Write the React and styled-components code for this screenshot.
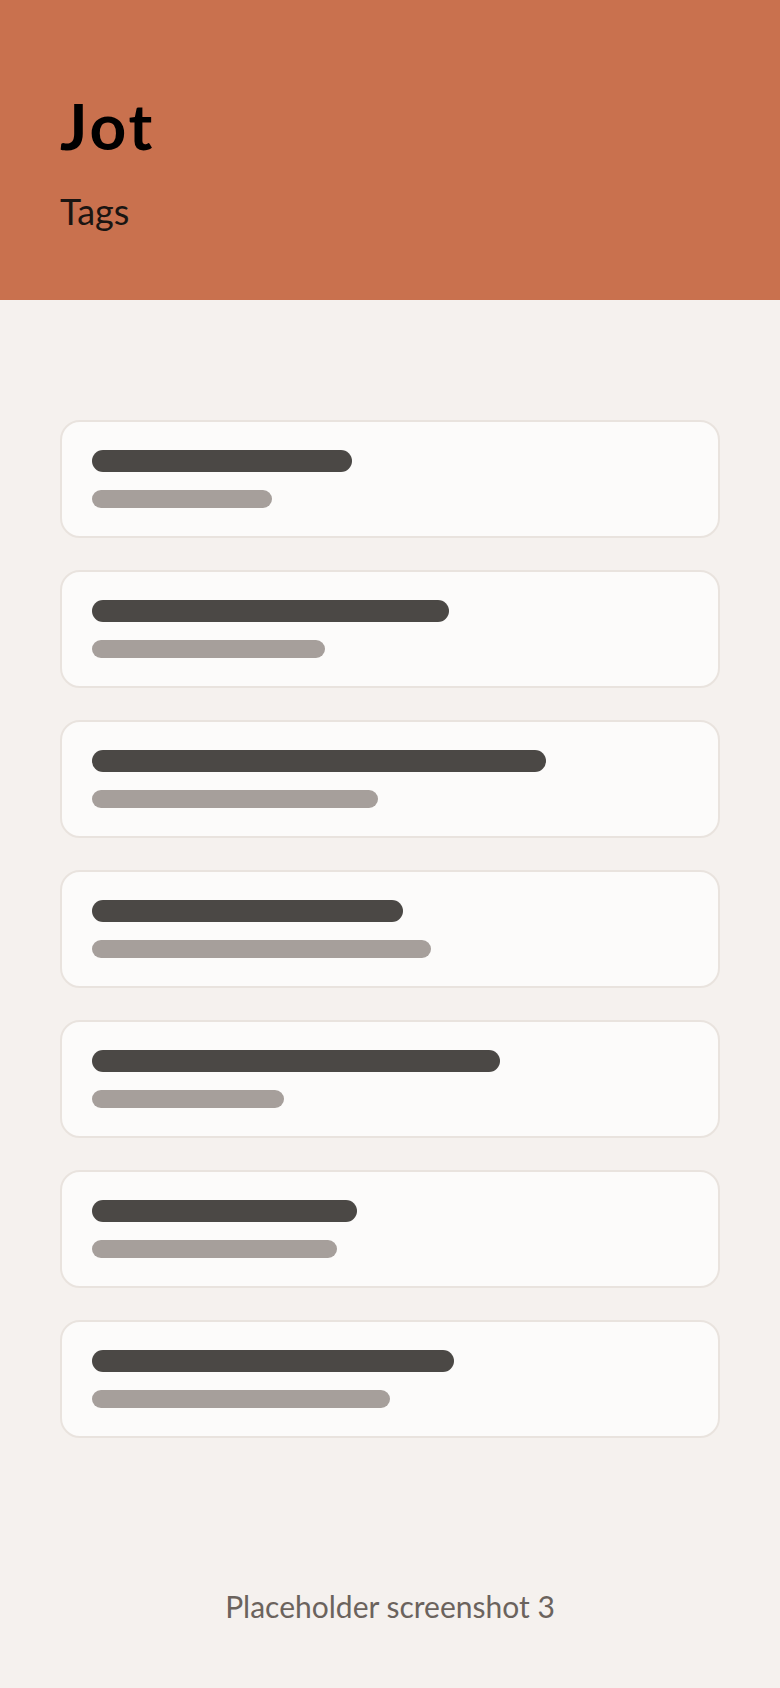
import styled, { createGlobalStyle } from "styled-components";

const GlobalStyle = createGlobalStyle`
    html, body {
        margin: 0;
        padding: 0;
        background: #f5f1ee;
        font-family: Lato, "Open Sans", sans-serif;
    }
`;

const notes = [
    { title: 260, meta: 180 },
    { title: 357, meta: 233 },
    { title: 454, meta: 286 },
    { title: 311, meta: 339 },
    { title: 408, meta: 192 },
    { title: 265, meta: 245 },
    { title: 362, meta: 298 },
];

export default function App() {
    return (
        <Page>
            <GlobalStyle />
            <Header>
                <Title>Jot</Title>
                <Subtitle>Tags</Subtitle>
            </Header>
            <List>
                {notes.map((note, i) => (
                    <Card key={i}>
                        <Bar tone="dark" style={{ width: note.title }} />
                        <Bar tone="light" style={{ width: note.meta }} />
                    </Card>
                ))}
            </List>
            <Footer>Placeholder screenshot 3</Footer>
        </Page>
    );
}

const Page = styled.div`
    min-height: 1688px;
    display: flex;
    flex-direction: column;
    background: #f5f1ee;
`;

const Header = styled.header`
    height: 300px;
    box-sizing: border-box;
    padding: 88px 60px 0;
    background: #c9714e;
`;

const Title = styled.h1`
    margin: 0;
    font-size: 64px;
    line-height: 76.8px;
    font-weight: 700;
    letter-spacing: 3px;
    color: #000000;
`;

const Subtitle = styled.p`
    margin: 25px 0 0;
    font-size: 36px;
    line-height: 43.2px;
    font-weight: 400;
    color: #1a1512;
`;

const List = styled.main`
    display: flex;
    flex-direction: column;
    gap: 32px;
    padding: 120px 60px 0;
`;

const Card = styled.div`
    display: flex;
    flex-direction: column;
    gap: 18px;
    padding: 28px 30px;
    background: #fcfbfa;
    border: 2px solid #e9e3de;
    border-radius: 20px;
`;

const Bar = styled.div`
    height: ${p => (p.tone === "dark" ? "22px" : "18px")};
    border-radius: 11px;
    background: ${p => (p.tone === "dark" ? "#4b4845" : "#a69f9b")};
`;

const Footer = styled.footer`
    margin-top: 150px;
    text-align: center;
    font-size: 30px;
    line-height: 36px;
    color: #6b635d;
`;
